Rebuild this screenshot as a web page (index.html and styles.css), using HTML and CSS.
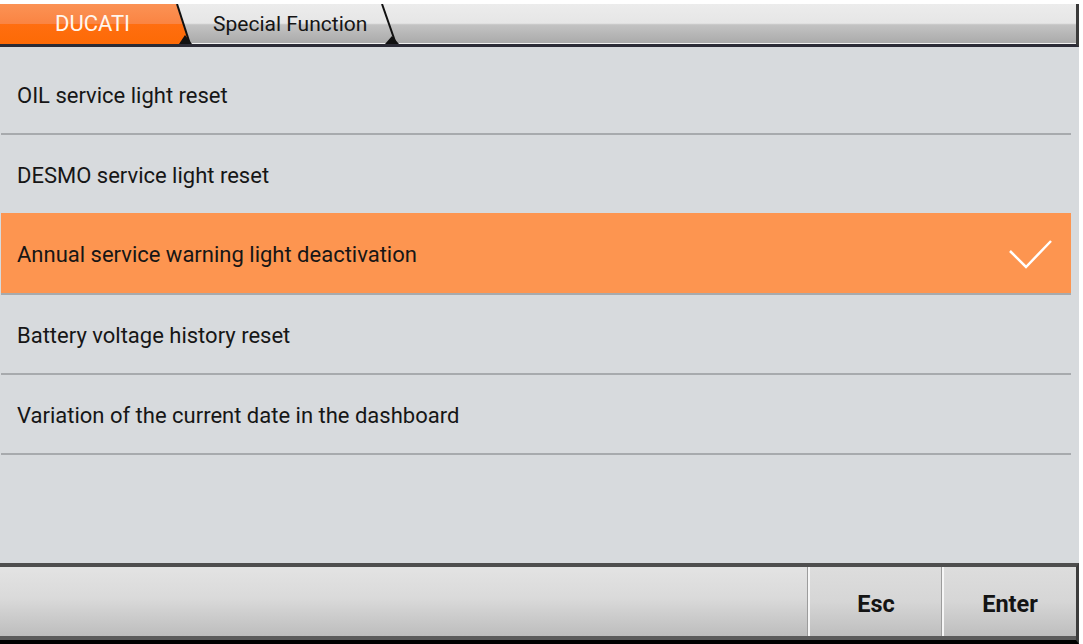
FILE: index.html
```html
<!DOCTYPE html>
<html>
<head>
<meta charset="utf-8">
<link rel="stylesheet" href="styles.css">
</head>
<body>
<div class="app">
  <div class="topbar">
    <div class="tab tab-brand">DUCATI</div>
    <svg class="tab-sep" width="30" height="40" viewBox="0 0 30 40">
      <defs>
        <linearGradient id="og" x1="0" y1="0" x2="0" y2="1">
          <stop offset="0" stop-color="#fb9255"/>
          <stop offset="0.5" stop-color="#fa8442"/>
          <stop offset="0.5" stop-color="#ff6e10"/>
          <stop offset="1" stop-color="#fd6a06"/>
        </linearGradient>
      </defs>
      <polygon points="0,0 7,0 20,40 0,40" fill="url(#og)"/>
      <line x1="7" y1="0" x2="20" y2="40" stroke="#111" stroke-width="2"/>
      <polygon points="9,40 15,31 22,40" fill="#111"/>
    </svg>
    <div class="tab tab-current">Special Function</div>
    <svg class="tab-sep" width="30" height="40" viewBox="0 0 30 40">
      <line x1="7" y1="0" x2="21" y2="40" stroke="#111" stroke-width="2"/>
      <polygon points="10,40 17,32 24,40" fill="#111"/>
    </svg>
  </div>

  <div class="panel">
    <div class="row">OIL service light reset</div>
    <div class="row">DESMO service light reset</div>
    <div class="row row-selected">
      <span>Annual service warning light deactivation</span>
      <svg class="check" width="45" height="30" viewBox="0 0 45 30">
        <polyline points="2,12 18,28 43,2" fill="none" stroke="#fff" stroke-width="2.5"/>
      </svg>
    </div>
    <div class="row">Battery voltage history reset</div>
    <div class="row">Variation of the current date in the dashboard</div>
  </div>

  <div class="bottombar">
    <div class="bar-inner">
      <div class="spacer"></div>
      <div class="btn">Esc</div>
      <div class="btn">Enter</div>
    </div>
  </div>
</div>
</body>
</html>
```

FILE: styles.css
```css
* { box-sizing: border-box; }
html, body { margin: 0; padding: 0; background: #ffffff; }
body { font-family: Roboto, "Noto Sans", sans-serif; }

.app {
  width: 1079px;
  height: 644px;
  display: flex;
  flex-direction: column;
}

.topbar {
  margin-top: 4px;
  height: 43px;
  display: flex;
  align-items: stretch;
  background: linear-gradient(#ececec 0%, #e6e6e6 48%, #c3c3c3 52%, #a9a9a9 100%);
  border-bottom: 3px solid #2b2b36;
  border-right: 3px solid #3a3a3a;
  box-shadow: inset 0 -1px 0 #f2f2f2;
}

.tab {
  height: 40px;
  line-height: 40px;
  font-size: 21px;
  white-space: nowrap;
}

.tab-brand {
  width: 170px;
  padding-left: 55px;
  font-size: 22px;
  color: #fff6ee;
  background: linear-gradient(#fb9255 0%, #fa8442 50%, #ff6e10 50%, #fd6a06 100%);
}

.tab-sep { display: block; flex: none; }

.tab-current {
  margin-left: 13px;
  padding-right: 8px;
  color: #151515;
}

.panel {
  flex: 1;
  background: #d7dadd;
  padding: 8px 8px 0 1px;
}

.row {
  height: 80px;
  display: flex;
  align-items: center;
  justify-content: space-between;
  padding: 2px 18px 0 16px;
  border-bottom: 2px solid #a7aaad;
  font-size: 22px;
  color: #161616;
}

.row-selected {
  background: #fd9550;
  margin-top: -2px;
  height: 82px;
}

.check { display: block; }

.bottombar {
  height: 81px;
  border-top: 4px solid #4e4e4e;
  border-bottom: 4px solid #000;
  border-right: 3px solid #3c3c3c;
}

.bar-inner {
  height: 100%;
  display: flex;
  border-bottom: 4px solid #5b5b5b;
  background: linear-gradient(#e3e3e3 0%, #dadada 45%, #bdbdbd 100%);
}

.spacer { flex: 1; }

.btn {
  width: 134px;
  display: flex;
  align-items: center;
  justify-content: center;
  padding-top: 5px;
  font-size: 23.5px;
  font-weight: bold;
  color: #141414;
  border-left: 2px solid #f6f6f6;
  box-shadow: -1px 0 0 #9c9c9c;
  background: linear-gradient(#dddddd 0%, #d6d6d6 50%, #bebebe 100%);
}
```
